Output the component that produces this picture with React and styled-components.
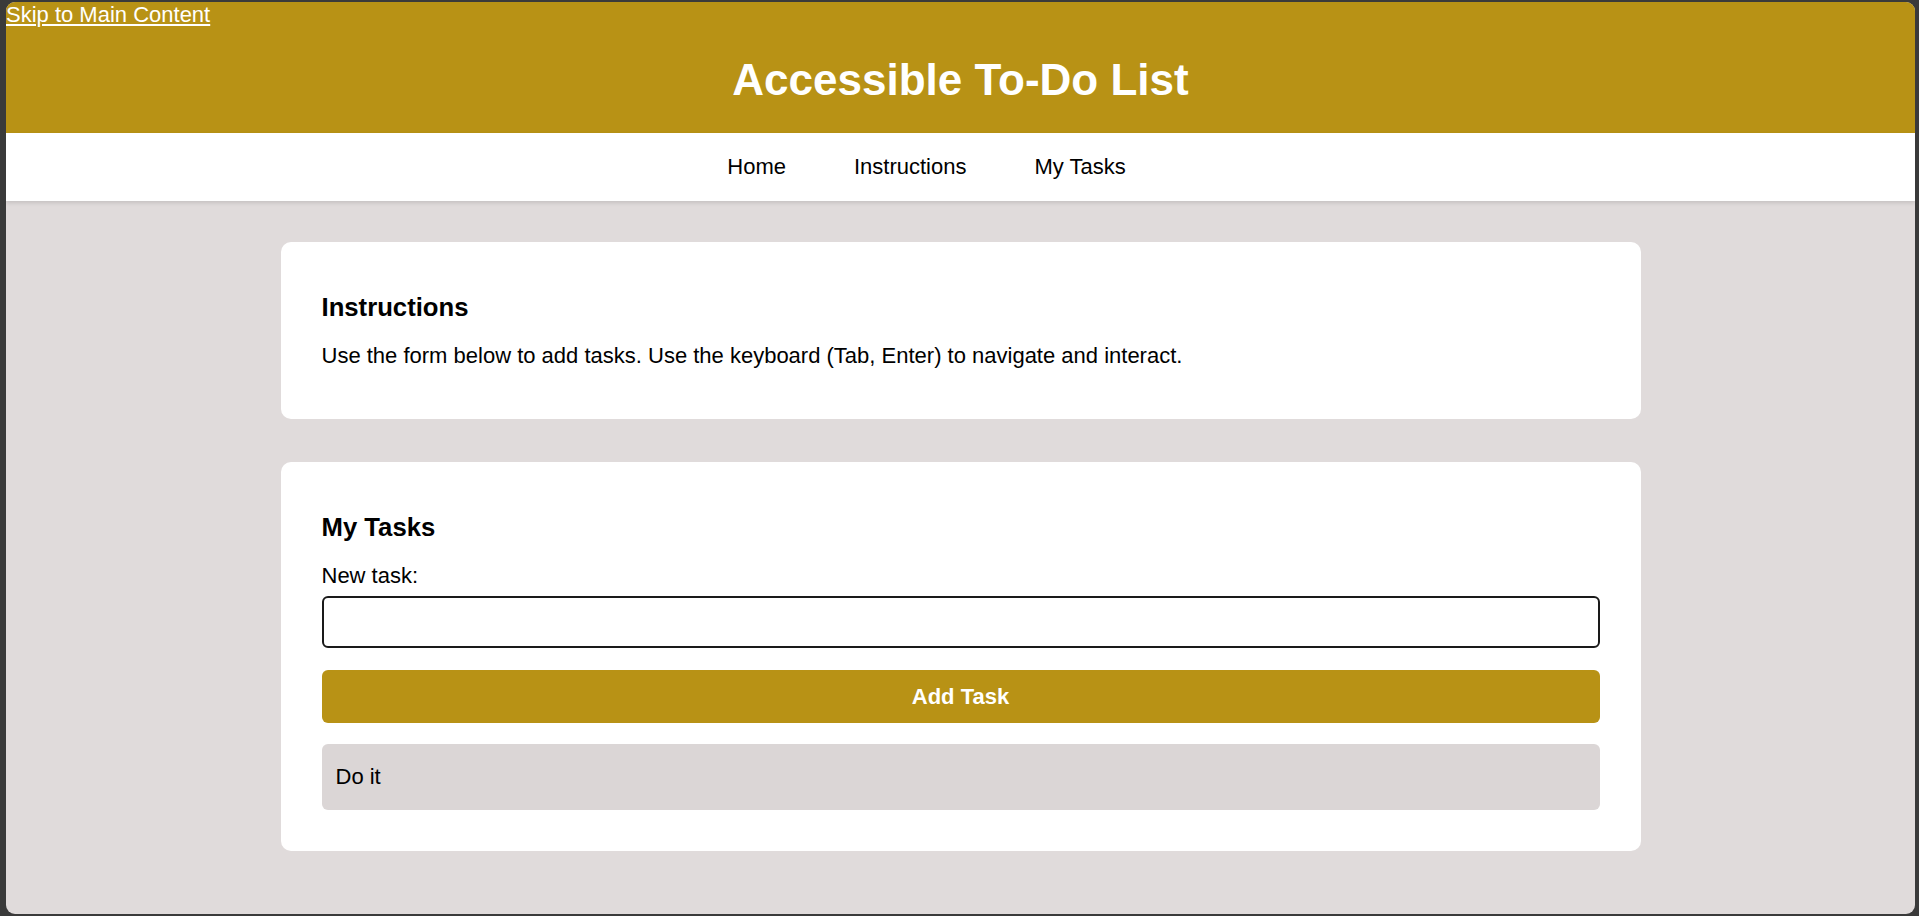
import React, { useState } from 'react'
import styled, { createGlobalStyle } from 'styled-components'

const GlobalStyle = createGlobalStyle`
  html, body {
    margin: 0;
    padding: 0;
    background: #3a3a3a;
  }
  body {
    font-family: "Liberation Sans", Arial, sans-serif;
    font-size: 22px;
    color: #000;
  }
  * { box-sizing: border-box; }
`

// the dark window frame round the page
const Frame = styled.div`
  padding: 2px 4px 2px 6px;
  height: 916px;
`

const Page = styled.div`
  height: 100%;
  background: #e0dbdb;
  border-radius: 9px;
  overflow: hidden;
`

const Header = styled.header`
  background: #b89215;
  color: #fff;
  padding: 0 0 28px;
  text-align: center;
`

const SkipLink = styled.a`
  display: block;
  width: fit-content;
  color: #fff;
  text-decoration: underline;
  font-size: 22px;
  line-height: 25px;
`

const Title = styled.h1`
  margin: 27px 0 0;
  font-size: 44px;
  line-height: 51px;
  font-weight: 700;
`

const Nav = styled.nav`
  background: #fff;
  box-shadow: 0 2px 4px rgba(0, 0, 0, 0.12);
  position: relative;
`

const NavList = styled.ul`
  list-style: none;
  margin: 0;
  padding: 21px 0;
  display: flex;
  justify-content: center;
`

const NavItem = styled.li`
  margin-right: 68px;
`

const NavLink = styled.a`
  color: #000;
  text-decoration: none;
  font-size: 22px;
  line-height: 25px;
`

const Main = styled.main`
  padding: 41px 0;
  display: flex;
  flex-direction: column;
  align-items: center;
  gap: 43px;
`

const Card = styled.section`
  width: 1360px;
  background: #fff;
  border-radius: 10px;
  padding: 40px 41px ${(p) => p.$bottom || 40}px;
`

const Heading = styled.h3`
  margin: 10px 0 21px;
  font-size: 25.7px;
  line-height: 30px;
  font-weight: 700;
`

const Text = styled.p`
  margin: 0 0 11px;
  line-height: 25px;
`

const Label = styled.label`
  display: block;
  line-height: 25px;
  margin-bottom: 8px;
`

const Input = styled.input`
  display: block;
  width: 100%;
  height: 52px;
  border: 2px solid #1a1a1a;
  border-radius: 6px;
  font: inherit;
  padding: 0 12px;
  outline: none;
`

const AddButton = styled.button`
  display: block;
  width: 100%;
  height: 53px;
  margin-top: 22px;
  border: none;
  border-radius: 6px;
  background: #b89215;
  color: #fff;
  font: inherit;
  font-weight: 700;
  cursor: pointer;
`

const TaskList = styled.ul`
  list-style: none;
  margin: 21px 0 0;
  padding: 0;
`

const TaskItem = styled.li`
  background: #dbd6d6;
  border-radius: 6px;
  padding: 20px 14px 21px;
  line-height: 25px;
`

export default function App() {
  const [tasks, setTasks] = useState(['Do it'])
  const [value, setValue] = useState('')

  const addTask = (e) => {
    e.preventDefault()
    if (!value.trim()) return
    setTasks([...tasks, value.trim()])
    setValue('')
  }

  return (
    <>
      <GlobalStyle />
      <Frame>
        <Page>
          <Header>
            <SkipLink href="#main">Skip to Main Content</SkipLink>
            <Title>Accessible To-Do List</Title>
          </Header>
          <Nav>
            <NavList>
              <NavItem><NavLink href="#home">Home</NavLink></NavItem>
              <NavItem><NavLink href="#instructions">Instructions</NavLink></NavItem>
              <NavItem><NavLink href="#tasks">My Tasks</NavLink></NavItem>
            </NavList>
          </Nav>
          <Main id="main">
            <Card id="instructions">
              <Heading>Instructions</Heading>
              <Text>Use the form below to add tasks. Use the keyboard (Tab, Enter) to navigate and interact.</Text>
            </Card>
            <Card id="tasks" $bottom={41}>
              <Heading>My Tasks</Heading>
              <form onSubmit={addTask}>
                <Label htmlFor="new-task">New task:</Label>
                <Input id="new-task" value={value} onChange={(e) => setValue(e.target.value)} />
                <AddButton type="submit">Add Task</AddButton>
              </form>
              <TaskList>
                {tasks.map((t, i) => (
                  <TaskItem key={i}>{t}</TaskItem>
                ))}
              </TaskList>
            </Card>
          </Main>
        </Page>
      </Frame>
    </>
  )
}
